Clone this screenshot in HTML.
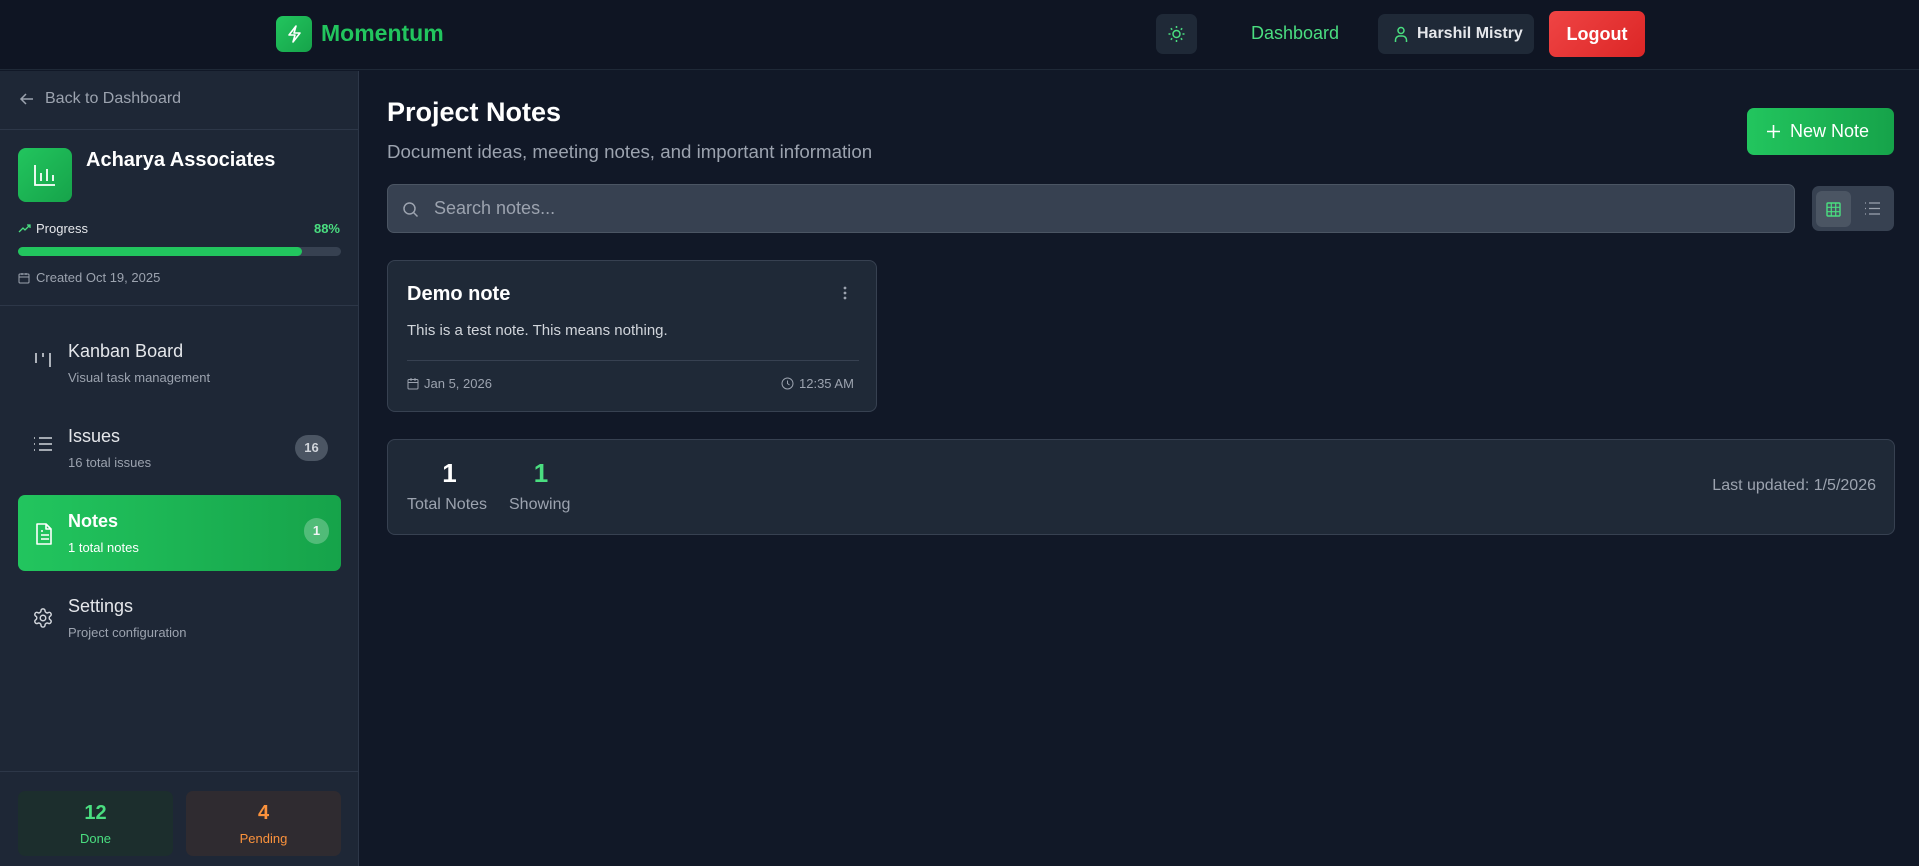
<!DOCTYPE html>
<html><head><meta charset="utf-8"><style>
*{box-sizing:border-box;margin:0;padding:0}
body{width:1919px;height:866px;background:#111827;font-family:"Liberation Sans",sans-serif;color:#f3f4f6;position:relative;overflow:hidden}
.hdr{position:absolute;left:0;top:0;width:1919px;height:70px;background:#0f1523;border-bottom:1px solid #1f2937}
.abs{position:absolute}
.side{position:absolute;left:0;top:71px;width:359px;height:795px;background:#1e2736;border-right:1px solid #2d3748}
.muted{color:#9ca3af}
svg{display:block}
</style></head><body>
<div class="hdr">
 <div class="abs" style="left:276px;top:16px;width:36px;height:36px;border-radius:7px;background:linear-gradient(135deg,#22c55e,#16a34a)">
  <svg width="36" height="36" viewBox="0 0 36 36"><path d="M20 10l-7 9h6l-2 7 7-9h-6z" fill="none" stroke="#fff" stroke-width="1.6" stroke-linejoin="round"/></svg></div>
 <div class="abs" style="left:321px;top:20px;font-size:23px;font-weight:bold;color:#22c55e">Momentum</div>
 <div class="abs" style="left:1156px;top:14px;width:41px;height:40px;border-radius:7px;background:#1f2937">
  <svg width="41" height="40" viewBox="0 0 41 40"><g stroke="#4ade80" stroke-width="1.5" fill="none"><circle cx="20.5" cy="20" r="3.5"/><path d="M20.5 12v2M20.5 26v2M12.5 20h2M26.5 20h2M14.8 14.3l1.4 1.4M24.8 24.3l1.4 1.4M14.8 25.7l1.4-1.4M24.8 15.7l1.4-1.4"/></g></svg></div>
 <div class="abs" style="left:1251px;top:23px;font-size:18px;color:#4ade80">Dashboard</div>
 <div class="abs" style="left:1378px;top:14px;width:156px;height:40px;border-radius:7px;background:#1f2937">
  <svg class="abs" style="left:14px;top:11px" width="18" height="18" viewBox="0 0 18 18"><g stroke="#4ade80" stroke-width="1.5" fill="none"><circle cx="9" cy="5.5" r="3"/><path d="M3.5 17v-2a4 4 0 0 1 4-4h3a4 4 0 0 1 4 4v2"/></g></svg>
  <div class="abs" style="left:39px;top:11px;font-size:16px;color:#e5e7eb;font-weight:bold">Harshil Mistry</div></div>
 <div class="abs" style="left:1549px;top:11px;width:96px;height:46px;border-radius:7px;background:linear-gradient(135deg,#ef4444,#dc2626);font-size:18px;font-weight:bold;color:#fff;text-align:center;line-height:46px">Logout</div>
</div>

<div class="side">
 <svg class="abs" style="left:18px;top:19px" width="18" height="18" viewBox="0 0 18 18"><path d="M15 9H3M8 4L3 9l5 5" stroke="#9ca3af" stroke-width="1.5" fill="none"/></svg>
 <div class="abs muted" style="left:45px;top:19px;font-size:16px">Back to Dashboard</div>
 <div class="abs" style="left:0;top:58px;width:358px;height:1px;background:#2d3748"></div>
 <div class="abs" style="left:18px;top:77px;width:54px;height:54px;border-radius:8px;background:linear-gradient(135deg,#22c55e,#16a34a)">
  <svg width="54" height="54" viewBox="0 0 54 54"><path d="M17 17v20h20M23 33v-8M29 33v-12M35 33v-6" stroke="#fff" stroke-width="1.8" fill="none"/></svg></div>
 <div class="abs" style="left:86px;top:78px;font-size:20px;font-weight:bold;color:#fff">Acharya Associates</div>
 <svg class="abs" style="left:18px;top:153px" width="13" height="10" viewBox="0 0 13 10"><path d="M1 8l4-4 2 2 5-5M9 1h3v3" stroke="#4ade80" stroke-width="1.3" fill="none"/></svg>
 <div class="abs" style="left:36px;top:150px;font-size:13px;color:#e5e7eb">Progress</div>
 <div class="abs" style="right:18px;top:150px;font-size:13px;font-weight:bold;color:#4ade80">88%</div>
 <div class="abs" style="left:18px;top:176px;width:323px;height:9px;border-radius:5px;background:#374151"><div style="width:284px;height:9px;border-radius:5px;background:#22c55e"></div></div>
 <svg class="abs" style="left:18px;top:201px" width="12" height="12" viewBox="0 0 12 12"><rect x="1" y="2" width="10" height="9" rx="1" stroke="#9ca3af" fill="none"/><path d="M1 5h10M4 1v2M8 1v2" stroke="#9ca3af"/></svg>
 <div class="abs muted" style="left:36px;top:199px;font-size:13px">Created Oct 19, 2025</div>
 <div class="abs" style="left:0;top:234px;width:358px;height:1px;background:#2d3748"></div>

 <svg class="abs" style="left:34px;top:280px" width="18" height="18" viewBox="0 0 18 18"><path d="M2 2v10M9 2v4M16 2v14" stroke="#d1d5db" stroke-width="1.6"/></svg>
 <div class="abs" style="left:68px;top:270px;font-size:18px;color:#e5e7eb">Kanban Board</div>
 <div class="abs muted" style="left:68px;top:299px;font-size:13px">Visual task management</div>

 <svg class="abs" style="left:33px;top:365px" width="20" height="16" viewBox="0 0 20 16"><path d="M6 2h13M6 8h13M6 14h13M1 2h1M1 8h1M1 14h1" stroke="#d1d5db" stroke-width="1.6"/></svg>
 <div class="abs" style="left:68px;top:355px;font-size:18px;color:#e5e7eb">Issues</div>
 <div class="abs muted" style="left:68px;top:384px;font-size:13px">16 total issues</div>
 <div class="abs" style="left:295px;top:364px;width:33px;height:26px;border-radius:13px;background:#4b5563;font-size:13px;font-weight:bold;color:#d1d5db;text-align:center;line-height:26px">16</div>

 <div class="abs" style="left:18px;top:424px;width:323px;height:76px;border-radius:7px;background:linear-gradient(90deg,#22c55e,#16a34a)">
  <svg class="abs" style="left:15px;top:27px" width="22" height="24" viewBox="0 0 22 24"><path d="M4 2h9l5 5v15H4z M13 2v5h5M8 13h8M8 17h8M8 9h2" stroke="#fff" stroke-width="1.6" fill="none" stroke-linejoin="round"/></svg>
  <div class="abs" style="left:50px;top:16px;font-size:18px;font-weight:bold;color:#fff">Notes</div>
  <div class="abs" style="left:50px;top:45px;font-size:13px;color:#fff">1 total notes</div>
  <div class="abs" style="left:286px;top:23px;width:25px;height:26px;border-radius:13px;background:rgba(255,255,255,.25);font-size:13px;font-weight:bold;text-align:center;line-height:26px">1</div></div>

 <svg class="abs" style="left:32px;top:536px" width="22" height="22" viewBox="0 0 24 24"><path d="M12.2 2h-.4a2 2 0 0 0-2 2v.2a2 2 0 0 1-1 1.7l-.4.3a2 2 0 0 1-2 0l-.2-.1a2 2 0 0 0-2.7.7l-.2.4a2 2 0 0 0 .7 2.7l.2.1a2 2 0 0 1 1 1.7v.5a2 2 0 0 1-1 1.7l-.2.1a2 2 0 0 0-.7 2.7l.2.4a2 2 0 0 0 2.7.7l.2-.1a2 2 0 0 1 2 0l.4.3a2 2 0 0 1 1 1.7v.2a2 2 0 0 0 2 2h.4a2 2 0 0 0 2-2v-.2a2 2 0 0 1 1-1.7l.4-.3a2 2 0 0 1 2 0l.2.1a2 2 0 0 0 2.7-.7l.2-.4a2 2 0 0 0-.7-2.7l-.2-.1a2 2 0 0 1-1-1.7v-.5a2 2 0 0 1 1-1.7l.2-.1a2 2 0 0 0 .7-2.7l-.2-.4a2 2 0 0 0-2.7-.7l-.2.1a2 2 0 0 1-2 0l-.4-.3a2 2 0 0 1-1-1.7V4a2 2 0 0 0-2-2z" stroke="#d1d5db" stroke-width="1.6" fill="none"/><circle cx="12" cy="12" r="3" stroke="#d1d5db" stroke-width="1.6" fill="none"/></svg>
 <div class="abs" style="left:68px;top:525px;font-size:18px;color:#e5e7eb">Settings</div>
 <div class="abs muted" style="left:68px;top:554px;font-size:13px">Project configuration</div>

 <div class="abs" style="left:0;top:700px;width:358px;height:1px;background:#2d3748"></div>
 <div class="abs" style="left:18px;top:720px;width:155px;height:65px;border-radius:7px;background:#1c2e2d;text-align:center">
  <div style="font-size:20px;font-weight:bold;color:#4ade80;margin-top:11px">12</div><div style="font-size:13px;color:#4ade80;margin-top:6px">Done</div></div>
 <div class="abs" style="left:186px;top:720px;width:155px;height:65px;border-radius:7px;background:#2f2b30;text-align:center">
  <div style="font-size:20px;font-weight:bold;color:#fb923c;margin-top:11px">4</div><div style="font-size:13px;color:#fb923c;margin-top:6px">Pending</div></div>
</div>

<div class="abs" style="left:387px;top:97px;font-size:27px;font-weight:bold;color:#fff">Project Notes</div>
<div class="abs muted" style="left:387px;top:141px;font-size:18.7px">Document ideas, meeting notes, and important information</div>
<div class="abs" style="left:1747px;top:108px;width:147px;height:47px;border-radius:7px;background:linear-gradient(90deg,#22c55e,#16a34a)">
 <svg class="abs" style="left:19px;top:16px" width="15" height="15" viewBox="0 0 15 15"><path d="M7.5 1v13M1 7.5h13" stroke="#fff" stroke-width="1.6"/></svg>
 <div class="abs" style="left:43px;top:13px;font-size:18px;color:#fff">New Note</div></div>

<div class="abs" style="left:387px;top:184px;width:1408px;height:49px;border-radius:7px;background:#374151;border:1px solid #4b5563">
 <svg class="abs" style="left:14px;top:16px" width="17" height="17" viewBox="0 0 17 17"><circle cx="7.5" cy="7.5" r="5.5" stroke="#9ca3af" stroke-width="1.5" fill="none"/><path d="M11.5 11.5l4 4" stroke="#9ca3af" stroke-width="1.5"/></svg>
 <div class="abs muted" style="left:46px;top:13px;font-size:18px">Search notes...</div></div>
<div class="abs" style="left:1812px;top:186px;width:82px;height:45px;border-radius:7px;background:#374151">
 <div class="abs" style="left:4px;top:5px;width:35px;height:36px;border-radius:6px;background:#4b5563">
  <svg class="abs" style="left:10px;top:11px" width="15" height="15" viewBox="0 0 15 15"><rect x="1" y="1" width="13" height="13" rx="1" stroke="#4ade80" stroke-width="1.4" fill="none"/><path d="M5.3 1v13M9.7 1v13M1 5.3h13M1 9.7h13" stroke="#4ade80" stroke-width="1.2"/></svg></div>
 <svg class="abs" style="left:52px;top:15px" width="17" height="15" viewBox="0 0 17 15"><path d="M5 2h11M5 7.5h11M5 13h11M1 2h1M1 7.5h1M1 13h1" stroke="#9ca3af" stroke-width="1.3"/></svg>
</div>

<div class="abs" style="left:387px;top:260px;width:490px;height:152px;border-radius:8px;background:#1f2937;border:1px solid #374151">
 <div class="abs" style="left:19px;top:22px;font-size:20px;font-weight:bold;color:#fff">Demo note</div>
 <svg class="abs" style="left:455px;top:25px" width="4" height="14" viewBox="0 0 4 14"><circle cx="2" cy="2" r="1.4" fill="#9ca3af"/><circle cx="2" cy="7" r="1.4" fill="#9ca3af"/><circle cx="2" cy="12" r="1.4" fill="#9ca3af"/></svg>
 <div class="abs" style="left:19px;top:61px;font-size:15px;color:#d1d5db">This is a test note. This means nothing.</div>
 <div class="abs" style="left:19px;top:99px;width:452px;height:1px;background:#374151"></div>
 <svg class="abs" style="left:19px;top:116px" width="12" height="13" viewBox="0 0 12 13"><rect x="1" y="2.5" width="10" height="9.5" rx="1" stroke="#9ca3af" fill="none"/><path d="M1 5.5h10M4 1v3M8 1v3" stroke="#9ca3af"/></svg>
 <div class="abs muted" style="left:36px;top:115px;font-size:13px">Jan 5, 2026</div>
 <svg class="abs" style="left:393px;top:116px" width="13" height="13" viewBox="0 0 13 13"><circle cx="6.5" cy="6.5" r="5.5" stroke="#9ca3af" fill="none"/><path d="M6.5 3.5v3l2 1.5" stroke="#9ca3af" fill="none"/></svg>
 <div class="abs muted" style="left:411px;top:115px;font-size:13px">12:35 AM</div>
</div>

<div class="abs" style="left:387px;top:439px;width:1508px;height:96px;border-radius:8px;background:#1f2937;border:1px solid #374151">
 <div class="abs" style="left:19px;top:18px;width:85px;text-align:center;font-size:26px;font-weight:bold;color:#fff">1</div>
 <div class="abs muted" style="left:19px;top:56px;font-size:16px">Total Notes</div>
 <div class="abs" style="left:121px;top:18px;width:64px;text-align:center;font-size:26px;font-weight:bold;color:#4ade80">1</div>
 <div class="abs muted" style="left:121px;top:56px;font-size:16px">Showing</div>
 <div class="abs muted" style="right:18px;top:37px;font-size:16px">Last updated: 1/5/2026</div>
</div>
</body></html>
